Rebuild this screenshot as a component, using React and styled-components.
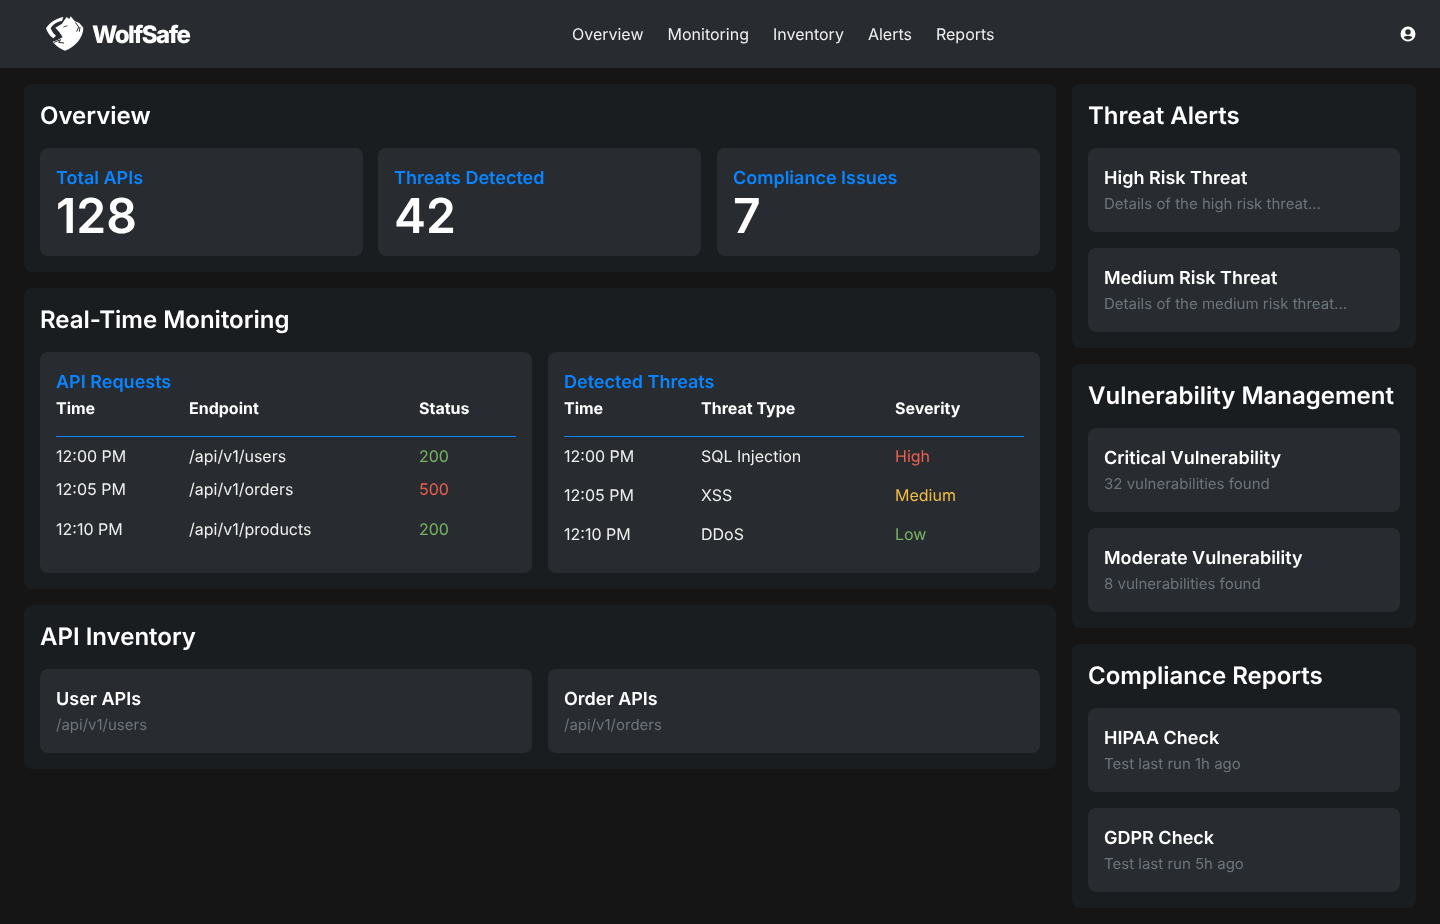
import React from "react";
import styled, { createGlobalStyle } from "styled-components";

const Global = createGlobalStyle`
  html, body { margin: 0; padding: 0; background: #151515; }
  body { font-family: Inter, "Liberation Sans", sans-serif; color: #fff; min-height: 924px; text-rendering: geometricPrecision; -webkit-font-smoothing: antialiased; }
  #root { will-change: transform; }
  * { box-sizing: border-box; }
`;

const Header = styled.header`
  height: 68px; background: #282b2f; display: flex; justify-content: space-between;
  align-items: center; padding: 0 24px 0 45px;
`;
const Brand = styled.div`display: flex; align-items: center; gap: 7px; margin-right: -23px;`;
const BrandName = styled.span`font-size: 24px; font-weight: 800; letter-spacing: -1.5px; line-height: 32px; position: relative; top: 1px;`;
const Nav = styled.nav`display: flex; gap: 24px;`;
const NavLink = styled.a`font-size: 16px; line-height: 24px; color: #f0f0f0;`;
const UserWrap = styled.div`display: flex;`;

const Main = styled.main`
  display: grid; grid-template-columns: 1032px 344px; gap: 16px; padding: 16px 24px; align-items: start;
`;
const Column = styled.div`display: flex; flex-direction: column; gap: 16px;`;
const Panel = styled.section`background: #1a1d20; border-radius: 8px; padding: 16px;`;
const PanelTitle = styled.h2`margin: 0 0 16px; font-size: 24px; line-height: 32px; font-weight: 600; color: #fff;`;
const StatGrid = styled.div`display: grid; grid-template-columns: 323px 323px 1fr; column-gap: 15px;`;
const Grid = styled.div`display: grid; grid-template-columns: repeat(2, 1fr); gap: 16px;`;
const Stack = styled.div`display: flex; flex-direction: column; gap: 16px;`;
const Card = styled.div`background: #282b2f; border-radius: 8px; padding: 16px;`;
const StatCard = styled(Card)`&:last-child { margin-left: 1px; }`;
const TableCard = styled(Card)`padding-bottom: 18px;`;
const StatLabel = styled.div`font-size: 18px; line-height: 28px; padding-top: 1px; font-weight: 600; color: #0a84ff;`;
const StatValue = styled.div`font-size: 48px; line-height: 46px; padding-bottom: 1px; font-weight: 600; color: #fff;`;
const ItemTitle = styled.div`font-size: 18px; line-height: 28px; padding-top: 1px; font-weight: 600; color: #fff;`;
const ItemText = styled.div`font-size: 15px; line-height: 22px; padding-bottom: 1px; color: #6c757d;`;
const TableTitle = styled.div`font-size: 18px; line-height: 22px; padding-top: 4px; height: 22px; font-weight: 600; color: #0a84ff;`;
const Row = styled.div`
  display: grid; grid-template-columns: ${p => p.$cols}; align-items: center; height: ${p => p.$h}px;
  font-size: 16px; color: #f0f0f0;
`;
const HeadRow = styled(Row)`
  font-weight: 700; color: #fff; border-bottom: 1px solid #0a84ff; padding: 6px 0 16px;
`;
const Cell = styled.div`color: ${p => p.$c || "inherit"};`;

const GREEN = "#78b562";
const RED = "#ec6050";
const YELLOW = "#f4bd45";

const Logo = () => (
  <svg width="40" height="40" viewBox="45 45 120 120" fill="none">
    <path fill="#fff" d="M48 88C60 68 80 58 100 54L96 66C82 68 70 74 62 88C66 98 72 106 78 110L70 118C60 112 52 100 48 88Z" />
    <path fill="#fff" d="M76 86L96 74L104 62L110 54L118 60L122 52L134 66L148 72L160 86C160 115 135 145 105 155C92 150 80 142 68 128L84 122L98 114L88 100Z" />
    <path stroke="#282b2f" strokeWidth="3" d="M136 70L146 84L140 98M150 84L148 98" />
    <path stroke="#282b2f" strokeWidth="3" d="M72 130L92 122L86 130L102 132" />
    <path stroke="#282b2f" strokeWidth="2.500" d="M100 84L112 80" />
  </svg>
);

const UserIcon = () => (
  <svg width="16" height="16" viewBox="0 0 16 16">
    <path fill="#fff" fillRule="evenodd" d="M8 .5a7.500 7.500 0 1 0 0 15 7.500 7.500 0 0 0 0-15ZM8 3.300a2.700 2.700 0 1 1 0 5.400 2.700 2.700 0 0 1 0-5.400ZM3.600 11.600C4.300 10.400 5.700 9.700 8 9.700s3.700.7 4.400 1.900A5.700 5.700 0 0 1 8 13.700a5.700 5.700 0 0 1-4.400-2.100Z"/>
  </svg>
);

const stats = [["Total APIs", "128"], ["Threats Detected", "42"], ["Compliance Issues", "7"]];
const reqCols = "133px 230px 1fr";
const threatCols = "137px 194px 1fr";
const requests = [
  ["12:00 PM", "/api/v1/users", "200", GREEN, 38],
  ["12:05 PM", "/api/v1/orders", "500", RED, 28],
  ["12:10 PM", "/api/v1/products", "200", GREEN, 52],
];
const threats = [
  ["12:00 PM", "SQL Injection", "High", RED, 38],
  ["12:05 PM", "XSS", "Medium", YELLOW, 40],
  ["12:10 PM", "DDoS", "Low", GREEN, 38],
];
const side = [
  ["Threat Alerts", [["High Risk Threat", "Details of the high risk threat..."], ["Medium Risk Threat", "Details of the medium risk threat..."]]],
  ["Vulnerability Management", [["Critical Vulnerability", "32 vulnerabilities found"], ["Moderate Vulnerability", "8 vulnerabilities found"]]],
  ["Compliance Reports", [["HIPAA Check", "Test last run 1h ago"], ["GDPR Check", "Test last run 5h ago"]]],
];

const DataTable = ({ title, cols, head, rows }) => (
  <TableCard>
    <TableTitle>{title}</TableTitle>
    <HeadRow $cols={cols} $h={47}>{head.map(h => <Cell key={h}>{h}</Cell>)}</HeadRow>
    {rows.map(r => (
      <Row key={r[0]} $cols={cols} $h={r[4]}>
        <Cell>{r[0]}</Cell><Cell>{r[1]}</Cell><Cell $c={r[3]}>{r[2]}</Cell>
      </Row>
    ))}
  </TableCard>
);

const Item = ({ title, text }) => (
  <Card><ItemTitle>{title}</ItemTitle><ItemText>{text}</ItemText></Card>
);

export default function App() {
  return (
    <>
      <Global />
      <Header>
        <Brand><Logo /><BrandName>WolfSafe</BrandName></Brand>
        <Nav>{["Overview", "Monitoring", "Inventory", "Alerts", "Reports"].map(n => <NavLink key={n}>{n}</NavLink>)}</Nav>
        <UserWrap><UserIcon /></UserWrap>
      </Header>
      <Main>
        <Column>
          <Panel>
            <PanelTitle>Overview</PanelTitle>
            <StatGrid>
              {stats.map(([l, v]) => <StatCard key={l}><StatLabel>{l}</StatLabel><StatValue>{v}</StatValue></StatCard>)}
            </StatGrid>
          </Panel>
          <Panel>
            <PanelTitle>Real-Time Monitoring</PanelTitle>
            <Grid>
              <DataTable title="API Requests" cols={reqCols} head={["Time", "Endpoint", "Status"]} rows={requests} />
              <DataTable title="Detected Threats" cols={threatCols} head={["Time", "Threat Type", "Severity"]} rows={threats} />
            </Grid>
          </Panel>
          <Panel>
            <PanelTitle>API Inventory</PanelTitle>
            <Grid>
              <Item title="User APIs" text="/api/v1/users" />
              <Item title="Order APIs" text="/api/v1/orders" />
            </Grid>
          </Panel>
        </Column>
        <Column>
          {side.map(([t, items]) => (
            <Panel key={t}>
              <PanelTitle>{t}</PanelTitle>
              <Stack>{items.map(([a, b]) => <Item key={a} title={a} text={b} />)}</Stack>
            </Panel>
          ))}
        </Column>
      </Main>
    </>
  );
}
